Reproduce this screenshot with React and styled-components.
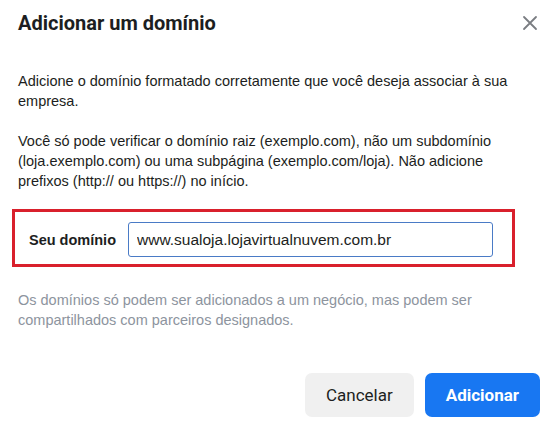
import React, { useState } from "react";
import styled, { createGlobalStyle } from "styled-components";

const GlobalStyle = createGlobalStyle`
  * {
    box-sizing: border-box;
  }
  body {
    margin: 0;
    background: #ffffff;
    font-family: "Liberation Sans", Arial, sans-serif;
    color: #1c1e21;
  }
`;

const Dialog = styled.div`
  width: 556px;
  height: 430px;
  display: flex;
  flex-direction: column;
  background: #ffffff;
`;

const Header = styled.div`
  display: flex;
  align-items: flex-start;
  justify-content: space-between;
  padding: 11px 16px 0 18px;
`;

const Title = styled.h2`
  margin: 0;
  font-family: Roboto, "Liberation Sans", sans-serif;
  font-size: 20px;
  line-height: 24px;
  font-weight: 700;
  color: #1c1e21;
`;

const CloseButton = styled.button`
  width: 20px;
  height: 20px;
  margin-top: 2px;
  padding: 0;
  border: none;
  background: transparent;
  display: flex;
  align-items: center;
  justify-content: center;
  cursor: pointer;
`;

const Body = styled.div`
  padding: 36px 18px 0 12px;
  flex: 1;
`;

const Paragraph = styled.p`
  max-width: 490px;
  margin: 0 0 20px 6px;
  font-size: 14.5px;
  line-height: 20px;
  color: ${props => (props.muted ? "#8d949e" : "#1c1e21")};
`;

const Highlight = styled.div`
  display: flex;
  align-items: center;
  width: 503px;
  margin: -2px 0 23px;
  padding: 10px 19px 7px 14px;
  border: 3px solid #d9202c;
`;

const Label = styled.label`
  font-size: 14.5px;
  font-weight: 700;
  color: #1c1e21;
`;

const Input = styled.input`
  margin-left: auto;
  flex: 0 0 365px;
  height: 35px;
  padding: 0 8px;
  border: 1px solid #4a7bc6;
  border-radius: 3px;
  font-family: "Liberation Sans", Arial, sans-serif;
  font-size: 15.5px;
  color: #1c1e21;
  outline: none;
`;

const Footer = styled.div`
  display: flex;
  justify-content: flex-end;
  gap: 11px;
  padding: 0 16px 13px 0;
`;

const Button = styled.button`
  height: 44px;
  padding: 0 21px;
  border: none;
  border-radius: 7px;
  font-family: Roboto, "Liberation Sans", sans-serif;
  font-size: 17px;
  font-weight: ${props => (props.primary ? 700 : 400)};
  color: ${props => (props.primary ? "#ffffff" : "#1c1e21")};
  background: ${props => (props.primary ? "#1877f2" : "#f0f0f0")};
  cursor: pointer;
`;

const CloseIcon = () => (
  <svg width="16" height="16" viewBox="0 0 16 16">
    <path
      d="M2 2 L14 14 M14 2 L2 14"
      stroke="#7a7d82"
      strokeWidth="1.8"
      strokeLinecap="round"
    />
  </svg>
);

export default function App() {
  const [domain, setDomain] = useState("www.sualoja.lojavirtualnuvem.com.br");

  return (
    <>
      <GlobalStyle />
      <Dialog>
        <Header>
          <Title>Adicionar um domínio</Title>
          <CloseButton aria-label="Fechar">
            <CloseIcon />
          </CloseButton>
        </Header>
        <Body>
          <Paragraph>
            Adicione o domínio formatado corretamente que você deseja associar à
            sua empresa.
          </Paragraph>
          <Paragraph>
            Você só pode verificar o domínio raiz (exemplo.com), não um
            subdomínio (loja.exemplo.com) ou uma subpágina (exemplo.com/loja).
            Não adicione prefixos (http:// ou https://) no início.
          </Paragraph>
          <Highlight>
            <Label htmlFor="domain">Seu domínio</Label>
            <Input
              id="domain"
              value={domain}
              onChange={e => setDomain(e.target.value)}
            />
          </Highlight>
          <Paragraph muted>
            Os domínios só podem ser adicionados a um negócio, mas podem ser
            compartilhados com parceiros designados.
          </Paragraph>
        </Body>
        <Footer>
          <Button>Cancelar</Button>
          <Button primary>Adicionar</Button>
        </Footer>
      </Dialog>
    </>
  );
}
